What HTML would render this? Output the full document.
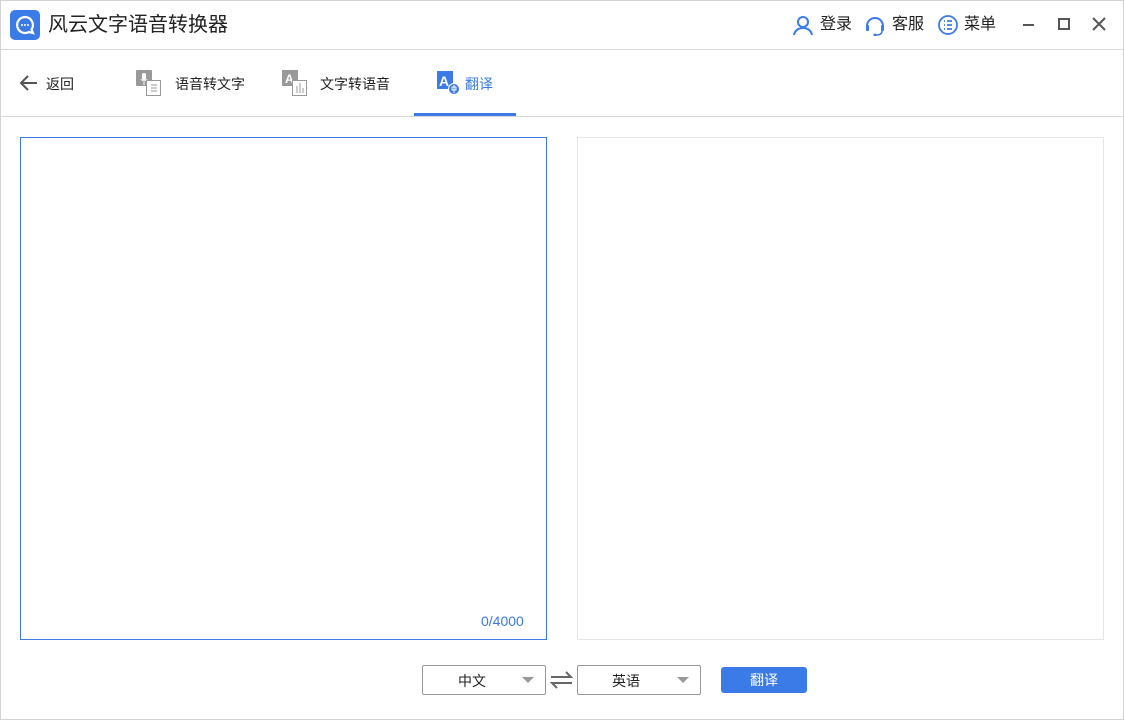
<!DOCTYPE html><html><head><meta charset="utf-8"><style>
*{margin:0;padding:0;box-sizing:border-box}
body{width:1124px;height:720px;overflow:hidden;background:#fff;font-family:"Liberation Sans","Noto Sans CJK SC",sans-serif;position:relative;color:#222}
.a{position:absolute}
</style></head><body>
<div class="a" style="left:0;top:0;width:1124px;height:720px;border:1px solid #d4d4d4"></div>
<div class="a" style="left:10px;top:10px;width:30px;height:30px;background:#3a7be8;border-radius:5px"></div>
<svg class="a" style="left:10px;top:10px" width="30" height="30"><path d="M15 7a8 8 0 1 0 4 15l4 1-1.5-3.5A8 8 0 0 0 15 7z" fill="none" stroke="#fff" stroke-width="2.2"/><circle cx="12" cy="15" r="1" fill="#fff"/><circle cx="15" cy="15" r="1" fill="#fff"/><circle cx="18" cy="15" r="1" fill="#fff"/></svg>
<div class="a" style="left:48px;top:12px;font-size:20px;line-height:26px;color:#222">风云文字语音转换器</div>
<svg class="a" style="left:792px;top:14px" width="22" height="22"><circle cx="11" cy="8" r="5" fill="none" stroke="#3a7be8" stroke-width="2"/><path d="M2 21c1-5 5-7 9-7s8 2 9 7" fill="none" stroke="#3a7be8" stroke-width="2"/></svg>
<div class="a" style="left:820px;top:15px;font-size:16px;line-height:20px">登录</div>
<svg class="a" style="left:864px;top:14px" width="22" height="22"><path d="M3 12a8 8 0 0 1 16 0" fill="none" stroke="#3a7be8" stroke-width="2"/><rect x="2" y="11" width="3" height="6" rx="1" fill="#3a7be8"/><rect x="17" y="11" width="3" height="6" rx="1" fill="#3a7be8"/><path d="M18 17q0 4-6 4" fill="none" stroke="#3a7be8" stroke-width="1.5"/><circle cx="11" cy="21" r="1.5" fill="#3a7be8"/></svg>
<div class="a" style="left:892px;top:15px;font-size:16px;line-height:20px">客服</div>
<svg class="a" style="left:937px;top:14px" width="22" height="22"><circle cx="11" cy="11" r="9" fill="none" stroke="#3a7be8" stroke-width="1.8"/><path d="M7 7h1M10 7h5M7 11h1M10 11h5M7 15h1M10 15h5" stroke="#3a7be8" stroke-width="1.8"/></svg>
<div class="a" style="left:964px;top:15px;font-size:16px;line-height:20px">菜单</div>
<div class="a" style="left:1023px;top:24px;width:11px;height:2px;background:#555"></div>
<div class="a" style="left:1058px;top:18px;width:12px;height:12px;border:2px solid #555"></div>
<svg class="a" style="left:1092px;top:17px" width="14" height="14"><path d="M1 1L13 13M13 1L1 13" stroke="#555" stroke-width="2"/></svg>
<div class="a" style="left:0;top:49px;width:1124px;height:1px;background:#d8d8d8"></div>
<svg class="a" style="left:19px;top:74px" width="20" height="18"><path d="M18 9H2M9 2L2 9l7 7" fill="none" stroke="#555" stroke-width="2"/></svg>
<div class="a" style="left:46px;top:75px;font-size:14px;line-height:18px">返回</div>
<div class="a" style="left:136px;top:70px;width:16px;height:16px;background:#999;border-radius:1px"></div>
<svg class="a" style="left:136px;top:70px" width="30" height="26"><rect x="6" y="3" width="4" height="7" rx="2" fill="#fff"/><path d="M5 9q3 4 6 0M8 12v3" stroke="#fff" fill="none"/><rect x="10.5" y="10.5" width="14" height="15" fill="#fff" stroke="#999"/><path d="M15 15h6M15 18h6M15 21h6" stroke="#999"/></svg>
<div class="a" style="left:175px;top:75px;font-size:14px;line-height:18px">语音转文字</div>
<div class="a" style="left:282px;top:70px;width:16px;height:16px;background:#999"></div>
<svg class="a" style="left:282px;top:70px" width="30" height="26"><text x="3" y="13" font-size="12" font-weight="bold" fill="#fff" font-family="Liberation Sans">A</text><rect x="10.5" y="10.5" width="14" height="15" fill="#fff" stroke="#999"/><path d="M15 16v7M18 13v10M21 18v5" stroke="#999"/></svg>
<div class="a" style="left:320px;top:75px;font-size:14px;line-height:18px">文字转语音</div>
<div class="a" style="left:437px;top:71px;width:16px;height:18px;background:#3a7be8"></div>
<svg class="a" style="left:437px;top:70px" width="26" height="26"><text x="2" y="16" font-size="14" font-weight="bold" fill="#fff" font-family="Liberation Sans">A</text><circle cx="17" cy="19" r="5.5" fill="#3a7be8" stroke="#fff"/><path d="M15 17h4v3h-4zM17 15v8" stroke="#fff" fill="none" stroke-width="0.9"/></svg>
<div class="a" style="left:465px;top:75px;font-size:14px;line-height:18px;color:#3a7be8">翻译</div>
<div class="a" style="left:414px;top:113px;width:102px;height:3px;background:#3a7be8"></div>
<div class="a" style="left:0;top:116px;width:1124px;height:1px;background:#d8d8d8"></div>
<div class="a" style="left:20px;top:137px;width:527px;height:503px;border:1px solid #3a7be8"></div>
<div class="a" style="left:481px;top:612px;font-size:14px;line-height:18px;color:#3a7be8">0/4000</div>
<div class="a" style="left:577px;top:137px;width:527px;height:503px;border:1px solid #e6e6e6"></div>
<div class="a" style="left:422px;top:665px;width:124px;height:30px;border:1px solid #999;border-radius:2px"></div>
<div class="a" style="left:458px;top:672px;font-size:14px;line-height:18px">中文</div>
<div class="a" style="left:522px;top:677px;border:6px solid transparent;border-top:6px solid #999;border-bottom:0"></div>
<svg class="a" style="left:550px;top:670px" width="23" height="20"><path d="M1 7h20l-5-5M22 13H2l5 5" fill="none" stroke="#666" stroke-width="2"/></svg>
<div class="a" style="left:577px;top:665px;width:124px;height:30px;border:1px solid #999;border-radius:2px"></div>
<div class="a" style="left:612px;top:672px;font-size:14px;line-height:18px">英语</div>
<div class="a" style="left:677px;top:677px;border:6px solid transparent;border-top:6px solid #999;border-bottom:0"></div>
<div class="a" style="left:721px;top:667px;width:86px;height:26px;background:#3a7be8;border-radius:3px;color:#fff;font-size:14px;line-height:26px;text-align:center">翻译</div>
</body></html>
